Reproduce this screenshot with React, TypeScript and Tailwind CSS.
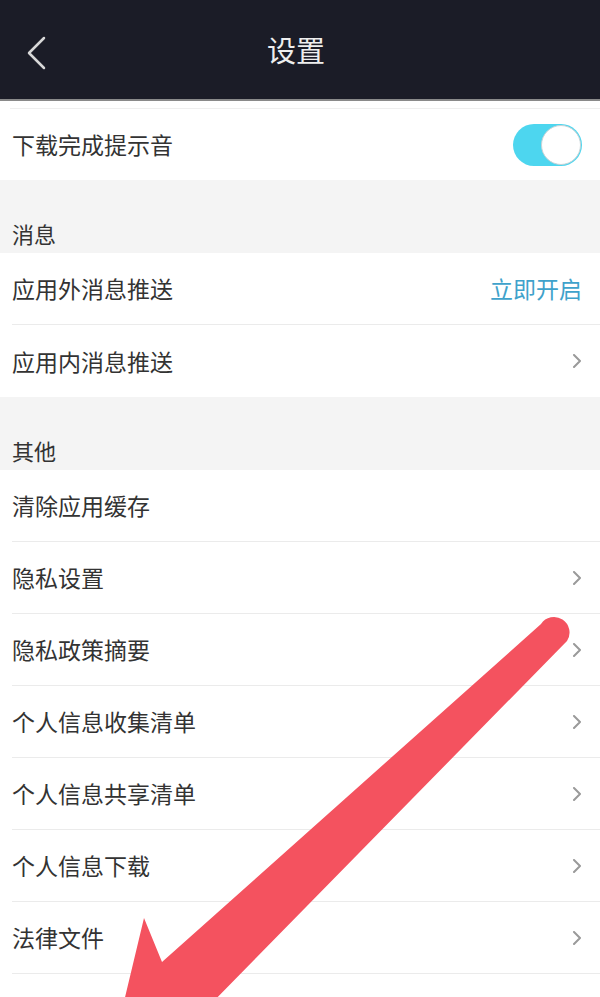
import React from "react";

const font = { fontFamily: '"Noto Sans CJK SC", "Noto Sans", sans-serif' };

function Chevron() {
  return (
    <svg width="10" height="14" viewBox="0 0 10 14" className="shrink-0">
      <polyline points="2,1 8,7 2,13" fill="none" stroke="#9a9a9a" strokeWidth="2" strokeLinecap="round" strokeLinejoin="round" />
    </svg>
  );
}

function Row({ label, right, last }: { label: string; right?: React.ReactNode; last?: boolean }) {
  return (
    <div className="bg-white pl-[12px]">
      <div className={`h-[72px] flex items-center justify-between pr-[18px] ${last ? "" : "border-b border-[#ebebeb]"}`}>
        <span className="text-[23px] text-[#333333] leading-none">{label}</span>
        {right}
      </div>
    </div>
  );
}

function Section({ label }: { label: string }) {
  return (
    <div className="h-[73px] bg-[#f4f4f4] flex items-end pl-[12px] pb-[8px]">
      <span className="text-[22px] text-[#333333] leading-[24px]">{label}</span>
    </div>
  );
}

export default function App() {
  return (
    <div className="relative w-[600px] h-[997px] overflow-hidden bg-[#f4f4f4]" style={font}>
      <div className="h-[99px] bg-[#1b1c27] flex items-center relative">
        <svg width="24" height="36" viewBox="0 0 24 36" className="absolute left-[24px] top-[35px]">
          <polyline points="20,3 5,18 20,33" fill="none" stroke="#d8d8d8" strokeWidth="2.5" strokeLinecap="round" strokeLinejoin="round" />
        </svg>
        <div className="flex-1 flex justify-center pr-[8px]">
          <span className="text-[29px] text-[#eeeeee] leading-none">设置</span>
        </div>
      </div>
      <div className="h-[2px] bg-[#8a8a8a]" />
      <div className="bg-white pt-[7px]">
        <div className="ml-[10px] h-px bg-[#efefef]" />
        <div className="h-[71px] flex items-center justify-between pl-[12px] pr-[18px]">
          <span className="text-[23px] text-[#333333] leading-none">下载完成提示音</span>
          <div className="w-[69px] h-[42px] rounded-full bg-[#4dd6ef] flex items-center justify-end pr-[1px]">
            <div className="w-[40px] h-[40px] rounded-full bg-white border border-[#c9d3d6]" />
          </div>
        </div>
      </div>
      <Section label="消息" />
      <Row label="应用外消息推送" right={<span className="text-[23px] text-[#3fa2cb] leading-none">立即开启</span>} />
      <Row label="应用内消息推送" right={<Chevron />} last />
      <Section label="其他" />
      <Row label="清除应用缓存" />
      <Row label="隐私设置" right={<Chevron />} />
      <Row label="隐私政策摘要" right={<Chevron />} />
      <Row label="个人信息收集清单" right={<Chevron />} />
      <Row label="个人信息共享清单" right={<Chevron />} />
      <Row label="个人信息下载" right={<Chevron />} />
      <Row label="法律文件" right={<Chevron />} />
      <Row label="关于我们" right={<Chevron />} />

      <svg className="absolute inset-0 pointer-events-none" width="600" height="997" viewBox="0 0 600 997">
        <path
          d="M 541 624 A 15 15 0 0 1 567 641 L 205 1010 L 150 1060 L 110 1060 L 144 918 L 162 962 Z"
          fill="#f4525f"
        />
      </svg>
    </div>
  );
}
